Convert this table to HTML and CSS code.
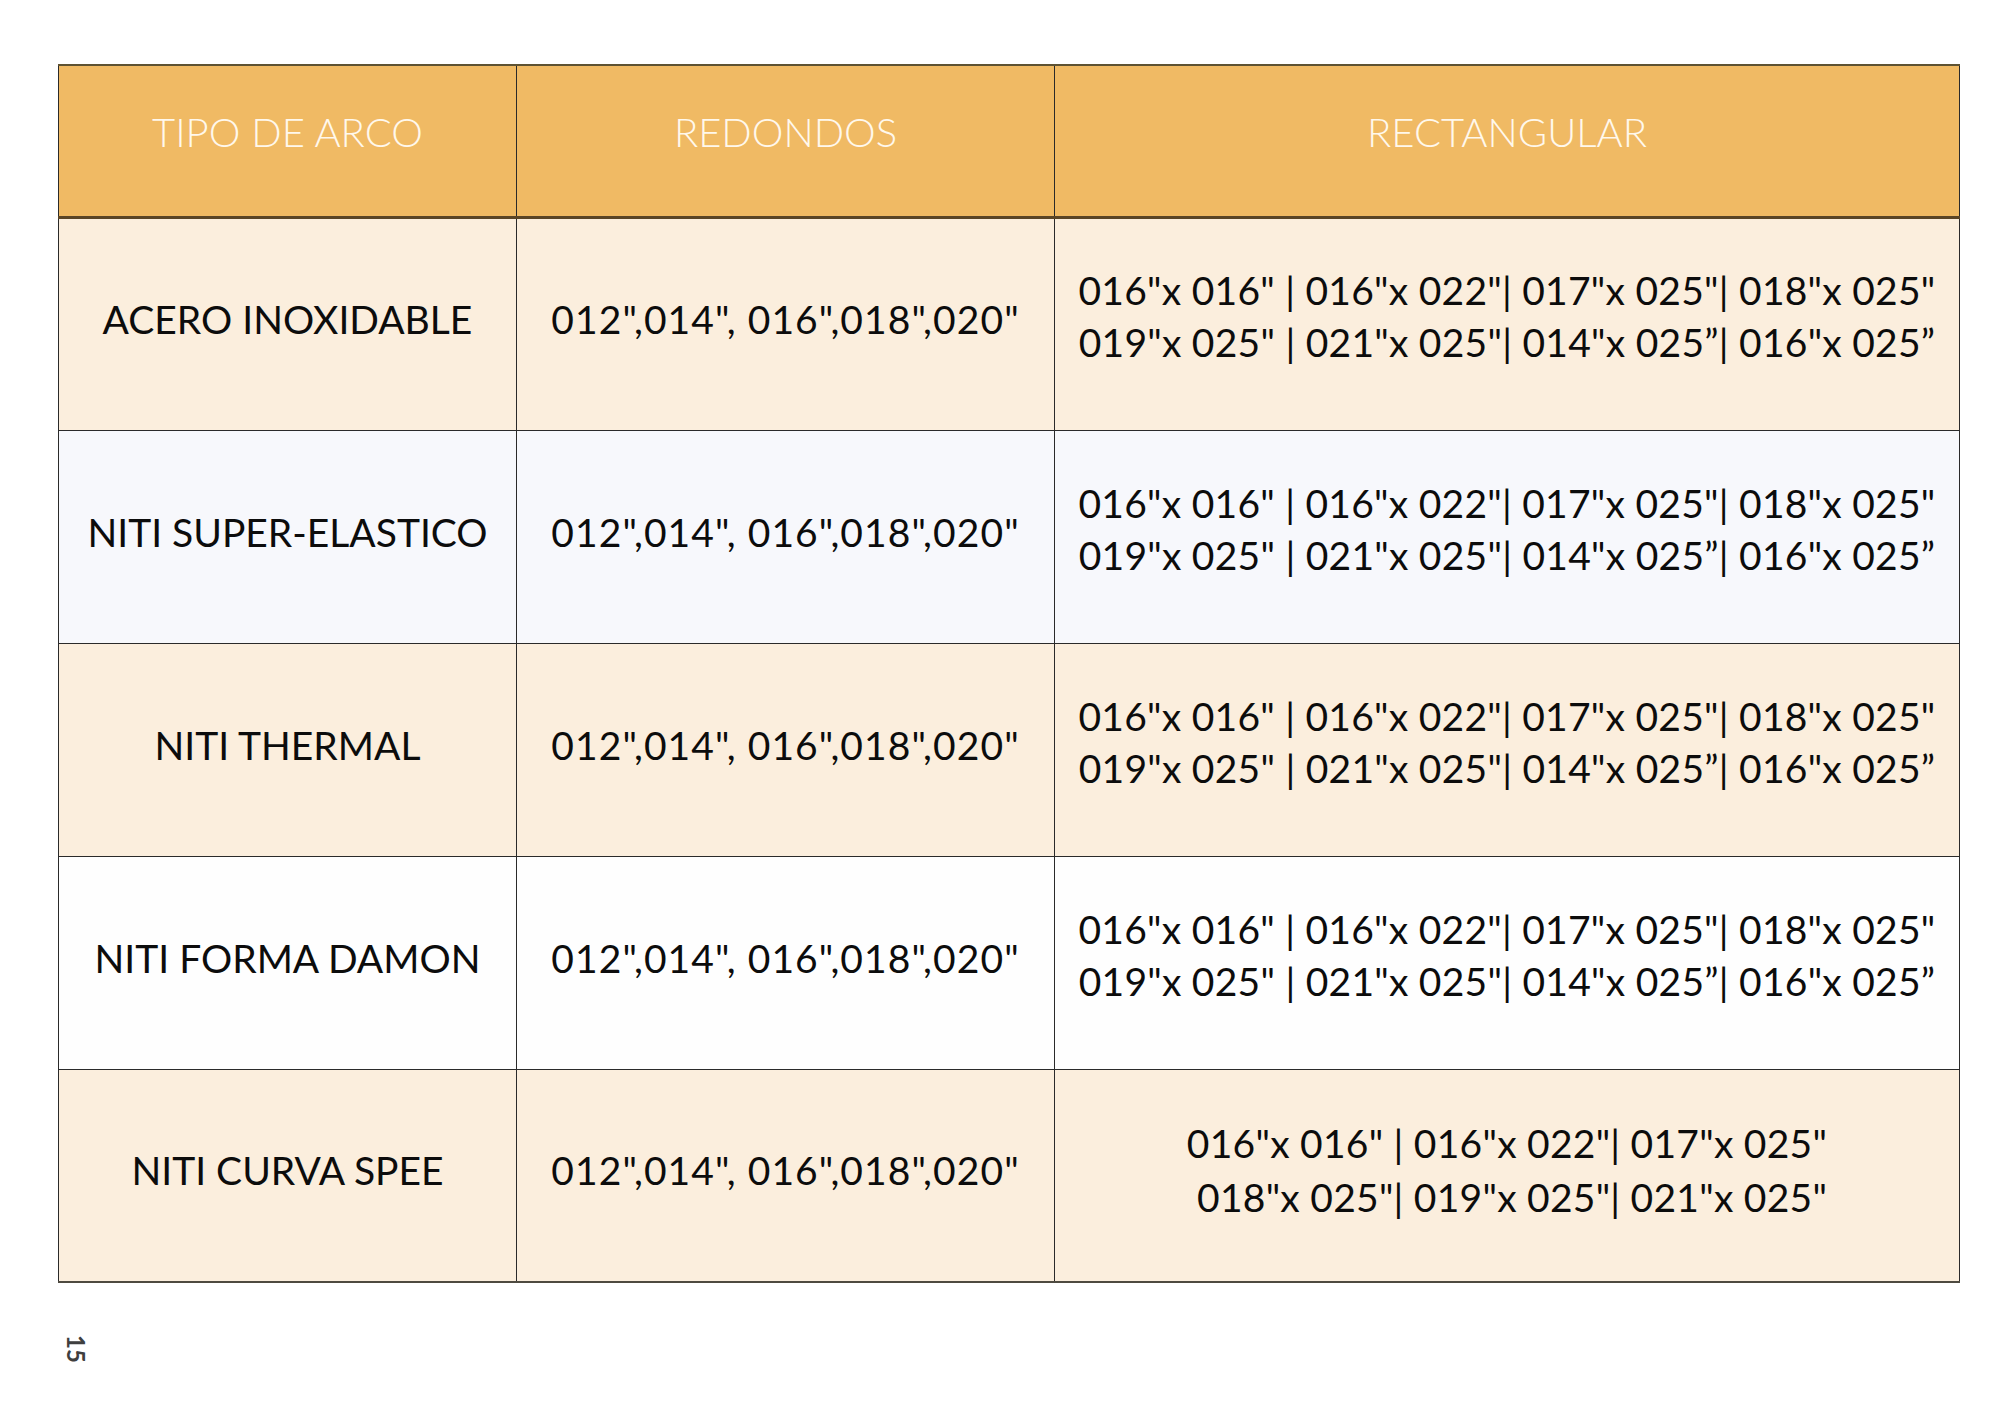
FILE: index.html
```html
<!DOCTYPE html>
<html lang="es">
<head>
<meta charset="utf-8">
<title>Tipos de arco</title>
<link rel="stylesheet" href="styles.css">
</head>
<body>
<div class="page">
  <table class="arcos">
    <colgroup>
      <col class="c-tipo">
      <col class="c-red">
      <col class="c-rect">
    </colgroup>
    <thead>
      <tr>
        <th>TIPO DE ARCO</th>
        <th>REDONDOS</th>
        <th>RECTANGULAR</th>
      </tr>
    </thead>
    <tbody>
      <tr class="cream">
        <td>ACERO INOXIDABLE</td>
        <td class="red">012",014", 016",018",020"</td>
        <td class="rect">016"x 016" | 016"x 022"| 017"x 025"| 018"x 025"<br>019"x 025" | 021"x 025"| 014"x 025”| 016"x 025”</td>
      </tr>
      <tr class="bluish">
        <td>NITI SUPER-ELASTICO</td>
        <td class="red">012",014", 016",018",020"</td>
        <td class="rect">016"x 016" | 016"x 022"| 017"x 025"| 018"x 025"<br>019"x 025" | 021"x 025"| 014"x 025”| 016"x 025”</td>
      </tr>
      <tr class="cream">
        <td>NITI THERMAL</td>
        <td class="red">012",014", 016",018",020"</td>
        <td class="rect">016"x 016" | 016"x 022"| 017"x 025"| 018"x 025"<br>019"x 025" | 021"x 025"| 014"x 025”| 016"x 025”</td>
      </tr>
      <tr class="white">
        <td>NITI FORMA DAMON</td>
        <td class="red">012",014", 016",018",020"</td>
        <td class="rect">016"x 016" | 016"x 022"| 017"x 025"| 018"x 025"<br>019"x 025" | 021"x 025"| 014"x 025”| 016"x 025”</td>
      </tr>
      <tr class="cream">
        <td>NITI CURVA SPEE</td>
        <td class="red">012",014", 016",018",020"</td>
        <td class="rect rect-short">016"x 016" | 016"x 022"| 017"x 025"<br>&nbsp;018"x 025"| 019"x 025"| 021"x 025"</td>
      </tr>
    </tbody>
  </table>
  <div class="folio">15</div>
</div>
</body>
</html>
```

FILE: styles.css
```css
html, body {
  margin: 0;
  padding: 0;
  background: #ffffff;
}

.page {
  width: 2000px;
  height: 1414px;
  padding: 64px 0 0 58px;
  box-sizing: border-box;
  font-family: Lato, "Open Sans", "Liberation Sans", sans-serif;
}

.arcos {
  border-collapse: collapse;
  table-layout: fixed;
  width: 1901px;
}

.c-tipo { width: 458px; }
.c-red { width: 538px; }
.c-rect { width: 905px; }

.arcos th,
.arcos td {
  border: 1px solid #2a2a2a;
  text-align: center;
  vertical-align: middle;
  padding: 0 0 10px 0;
}

.arcos thead tr {
  height: 152px;
  background: #f0ba64;
}

.arcos th {
  font-weight: 300;
  font-size: 40px;
  color: #fff8ec;
  padding-bottom: 18px;
  border-top: 2px solid #5e5232;
  border-bottom: 3px solid #5a4526;
}

.arcos tbody tr {
  height: 213px;
}

.arcos td {
  font-size: 39px;
  font-weight: 400;
  color: #0c0c0c;
}

.arcos td.red {
  letter-spacing: 1.1px;
}

.arcos td.rect {
  line-height: 52px;
  letter-spacing: 0.25px;
  padding-bottom: 16px;
}

.arcos td.rect-short {
  line-height: 54px;
  padding-bottom: 10px;
}

.arcos tbody tr:last-child td {
  border-bottom: 2px solid #4e4a40;
}

.cream { background: #fbeedd; }
.bluish { background: #f7f8fc; }
.white { background: #fefefe; }

.folio {
  writing-mode: vertical-rl;
  margin: 52px 0 0 8px;
  font-size: 24px;
  font-weight: 700;
  color: #3f3f3f;
  line-height: 20px;
}
```
